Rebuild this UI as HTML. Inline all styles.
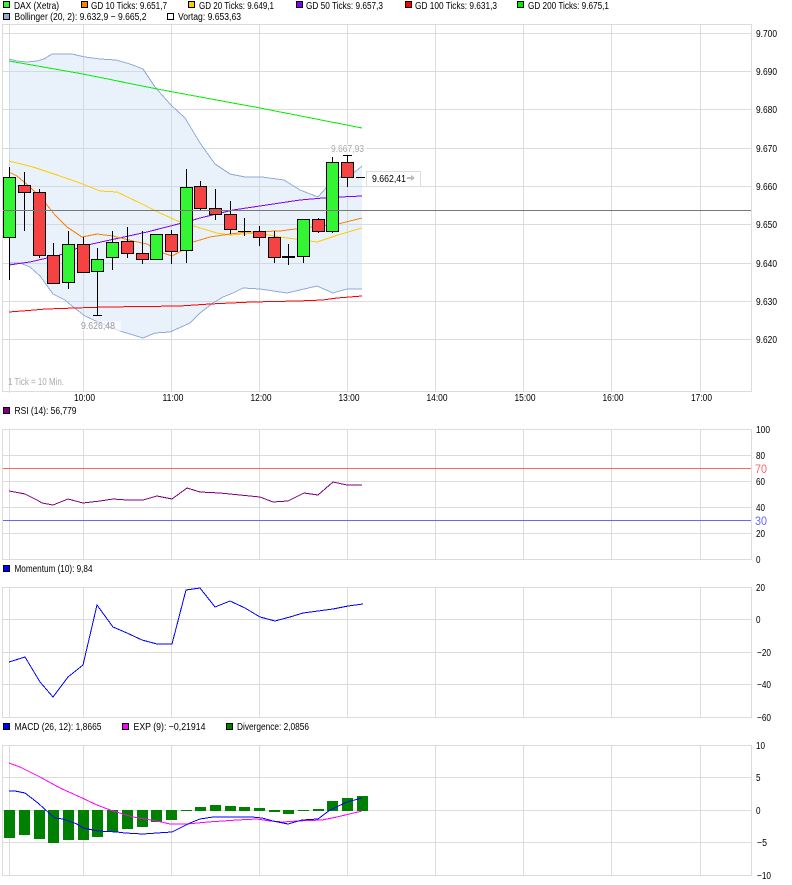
<!DOCTYPE html>
<html><head><meta charset="utf-8"><style>
html,body{margin:0;padding:0;background:#fff;width:792px;height:885px;overflow:hidden}
svg{display:block}
text{font-family:"Liberation Sans",sans-serif;font-size:10px;fill:#000}
.g line{stroke:#dcdcdc;stroke-width:1}
.c{stroke:#000;stroke-width:1}
.u{fill:#33f533}.d{fill:#f54343}
.l{fill:none;stroke-width:1}
.s{stroke:#000;stroke-width:1}
</style></head><body>
<svg width="792" height="885" viewBox="0 0 792 885" xmlns="http://www.w3.org/2000/svg">
<g shape-rendering="crispEdges">
<!-- legend swatches -->
<rect class="s" x="3.5" y="1.5" width="6" height="6" fill="#33f533"/>
<rect class="s" x="81.5" y="1.5" width="6" height="6" fill="#ff7f00"/>
<rect class="s" x="188.5" y="1.5" width="6" height="6" fill="#ffcc00"/>
<rect class="s" x="296.5" y="1.5" width="6" height="6" fill="#7f00ff"/>
<rect class="s" x="405.5" y="1.5" width="6" height="6" fill="#ff0000"/>
<rect class="s" x="517.5" y="1.5" width="6" height="6" fill="#00ee00"/>
<rect class="s" x="3.5" y="13.5" width="6" height="6" fill="#92a9dc"/>
<rect class="s" x="167.5" y="13.5" width="6" height="6" fill="#fff"/>
<rect class="s" x="3.5" y="407.5" width="6" height="6" fill="#800080"/>
<rect class="s" x="3.5" y="565.5" width="6" height="6" fill="#0000ff"/>
<rect class="s" x="3.5" y="723.5" width="6" height="6" fill="#0000ff"/>
<rect class="s" x="122.5" y="723.5" width="6" height="6" fill="#ff00ff"/>
<rect class="s" x="226.5" y="723.5" width="6" height="6" fill="#008000"/>

<!-- main grid -->
<g class="g">
<line x1="2" y1="24.5" x2="752" y2="24.5"/><line x1="2" y1="33.5" x2="752" y2="33.5"/><line x1="2" y1="71.5" x2="752" y2="71.5"/><line x1="2" y1="109.5" x2="752" y2="109.5"/><line x1="2" y1="148.5" x2="752" y2="148.5"/><line x1="2" y1="186.5" x2="752" y2="186.5"/><line x1="2" y1="224.5" x2="752" y2="224.5"/><line x1="2" y1="263.5" x2="752" y2="263.5"/><line x1="2" y1="301.5" x2="752" y2="301.5"/><line x1="2" y1="339.5" x2="752" y2="339.5"/><line x1="2" y1="391.5" x2="752" y2="391.5"/>
<line x1="2.5" y1="24" x2="2.5" y2="392"/><line x1="751.5" y1="24" x2="751.5" y2="392"/>
<line x1="9.5" y1="24" x2="9.5" y2="393"/><line x1="83.5" y1="24" x2="83.5" y2="392"/><line x1="171.5" y1="24" x2="171.5" y2="392"/><line x1="259.5" y1="24" x2="259.5" y2="392"/><line x1="347.5" y1="24" x2="347.5" y2="392"/><line x1="435.5" y1="24" x2="435.5" y2="392"/><line x1="523.5" y1="24" x2="523.5" y2="392"/><line x1="611.5" y1="24" x2="611.5" y2="392"/><line x1="700.5" y1="24" x2="700.5" y2="392"/>
<!-- RSI grid -->
<line x1="2" y1="429.5" x2="752" y2="429.5"/><line x1="2" y1="455.5" x2="752" y2="455.5"/><line x1="2" y1="481.5" x2="752" y2="481.5"/><line x1="2" y1="507.5" x2="752" y2="507.5"/><line x1="2" y1="533.5" x2="752" y2="533.5"/><line x1="2" y1="559.5" x2="752" y2="559.5"/>
<line x1="2.5" y1="429" x2="2.5" y2="560"/><line x1="751.5" y1="429" x2="751.5" y2="560"/>
<line x1="9.5" y1="429" x2="9.5" y2="560"/><line x1="83.5" y1="429" x2="83.5" y2="560"/><line x1="171.5" y1="429" x2="171.5" y2="560"/><line x1="259.5" y1="429" x2="259.5" y2="560"/><line x1="347.5" y1="429" x2="347.5" y2="560"/><line x1="435.5" y1="429" x2="435.5" y2="560"/><line x1="523.5" y1="429" x2="523.5" y2="560"/><line x1="611.5" y1="429" x2="611.5" y2="560"/><line x1="700.5" y1="429" x2="700.5" y2="560"/>
<!-- Momentum grid -->
<line x1="2" y1="587.5" x2="752" y2="587.5"/><line x1="2" y1="619.5" x2="752" y2="619.5"/><line x1="2" y1="652.5" x2="752" y2="652.5"/><line x1="2" y1="684.5" x2="752" y2="684.5"/><line x1="2" y1="717.5" x2="752" y2="717.5"/>
<line x1="2.5" y1="587" x2="2.5" y2="718"/><line x1="751.5" y1="587" x2="751.5" y2="718"/>
<line x1="9.5" y1="587" x2="9.5" y2="718"/><line x1="83.5" y1="587" x2="83.5" y2="718"/><line x1="171.5" y1="587" x2="171.5" y2="718"/><line x1="259.5" y1="587" x2="259.5" y2="718"/><line x1="347.5" y1="587" x2="347.5" y2="718"/><line x1="435.5" y1="587" x2="435.5" y2="718"/><line x1="523.5" y1="587" x2="523.5" y2="718"/><line x1="611.5" y1="587" x2="611.5" y2="718"/><line x1="700.5" y1="587" x2="700.5" y2="718"/>
<!-- MACD grid -->
<line x1="2" y1="745.5" x2="752" y2="745.5"/><line x1="2" y1="777.5" x2="752" y2="777.5"/><line x1="2" y1="810.5" x2="752" y2="810.5"/><line x1="2" y1="842.5" x2="752" y2="842.5"/><line x1="2" y1="875.5" x2="752" y2="875.5"/>
<line x1="2.5" y1="745" x2="2.5" y2="876"/><line x1="751.5" y1="745" x2="751.5" y2="876"/>
<line x1="9.5" y1="745" x2="9.5" y2="876"/><line x1="83.5" y1="745" x2="83.5" y2="876"/><line x1="171.5" y1="745" x2="171.5" y2="876"/><line x1="259.5" y1="745" x2="259.5" y2="876"/><line x1="347.5" y1="745" x2="347.5" y2="876"/><line x1="435.5" y1="745" x2="435.5" y2="876"/><line x1="523.5" y1="745" x2="523.5" y2="876"/><line x1="611.5" y1="745" x2="611.5" y2="876"/><line x1="700.5" y1="745" x2="700.5" y2="876"/>
</g>

<!-- Bollinger band -->
<polygon fill="#bcd2f3" fill-opacity=".32" points="9,59 17,61 27,62 37,61 44,59 52,54 72,54 85,57 100,59 116,60 130,64 143,69 155,87 170,104 185,118 200,143 215,164 230,174 245,177 262,177 284,180 300,190 318,197 326,188 338,178 355,172 362,166 362,289 347,289 333,293 317,286 287,293 260,289 243,288 233,293 223,297 213,303 200,313 190,323 170,332 155,333 143,338 120,331 100,323 85,316 72,306 65,300 53,294 40,276 30,267 20,263 9,263"/>
<polyline class="l" stroke="#92a9dc" points="9,59 17,61 27,62 37,61 44,59 52,54 72,54 85,57 100,59 116,60 130,64 143,69 155,87 170,104 185,118 200,143 215,164 230,174 245,177 262,177 284,180 300,190 318,197 326,188 338,178 355,172 362,166"/>
<polyline class="l" stroke="#92a9dc" points="9,263 20,263 30,267 40,276 53,294 65,300 72,306 85,316 100,323 120,331 143,338 155,333 170,332 190,323 200,313 213,303 223,297 233,293 243,288 260,289 287,293 317,286 333,293 347,289 362,289"/>

<!-- moving averages -->
<polyline class="l" stroke="#00f000" points="9,61 83,74 157,89 260,108 362,128"/>
<polyline class="l" stroke="#ff0000" points="9,312 22,311 46,309 105,307 180,306 210,304 252,302 297,301 323,300 337,298 362,296"/>
<polyline class="l" stroke="#7f00ff" points="9,265 30,262 60,255 83,246 110,240 147,232 190,221 200,218 233,210 300,200 323,198 340,197 362,196"/>
<polyline class="l" stroke="#ffcc00" points="9,161 33,167 57,175 80,183 100,191 117,192 140,203 160,213 180,222 190,225 217,233 230,235 257,233 280,237 317,242 338,235 362,228"/>
<polyline class="l" stroke="#ff7f00" points="9,172 17,176 30,187 43,200 55,215 67,227 82,237 97,234 113,236 133,241 147,244 160,252 172,256 187,248 190,243 210,237 230,234 247,232 280,231 303,228 338,224 362,218"/>

<!-- candles -->
<g class="c">
<line x1="9.5" y1="167" x2="9.5" y2="280"/><rect class="u" x="3.5" y="177.5" width="12" height="60"/>
<line x1="24.5" y1="172" x2="24.5" y2="231"/><rect class="d" x="18.5" y="185.5" width="12" height="7"/>
<line x1="39.5" y1="189" x2="39.5" y2="258"/><rect class="d" x="33.5" y="192.5" width="12" height="63"/>
<line x1="53.5" y1="243" x2="53.5" y2="284"/><rect class="d" x="47.5" y="255.5" width="12" height="28"/>
<line x1="68.5" y1="231" x2="68.5" y2="289"/><rect class="u" x="62.5" y="244.5" width="12" height="38"/>
<line x1="83.5" y1="237" x2="83.5" y2="272"/><rect class="d" x="77.5" y="244.5" width="12" height="28"/>
<line x1="97.5" y1="248" x2="97.5" y2="315"/><line x1="93" y1="315.5" x2="102" y2="315.5"/><rect class="u" x="91.5" y="259.5" width="12" height="12"/>
<line x1="112.5" y1="231" x2="112.5" y2="270"/><rect class="u" x="106.5" y="242.5" width="12" height="15"/>
<line x1="127.5" y1="227" x2="127.5" y2="258"/><rect class="d" x="121.5" y="241.5" width="12" height="12"/>
<line x1="142.5" y1="231" x2="142.5" y2="264"/><rect class="d" x="136.5" y="253.5" width="12" height="6"/>
<rect class="u" x="150.5" y="234.5" width="12" height="25"/>
<line x1="171.5" y1="230" x2="171.5" y2="264"/><rect class="d" x="165.5" y="234.5" width="12" height="17"/>
<line x1="186.5" y1="169" x2="186.5" y2="263"/><rect class="u" x="180.5" y="187.5" width="12" height="63"/>
<line x1="200.5" y1="181" x2="200.5" y2="210"/><rect class="d" x="194.5" y="186.5" width="12" height="22"/>
<line x1="215.5" y1="189" x2="215.5" y2="220"/><rect class="d" x="209.5" y="208.5" width="12" height="6"/>
<line x1="230.5" y1="201" x2="230.5" y2="234"/><rect class="d" x="224.5" y="214.5" width="12" height="15"/>
<line x1="244.5" y1="218" x2="244.5" y2="236"/><line x1="238" y1="231.5" x2="251" y2="231.5"/>
<line x1="259.5" y1="226" x2="259.5" y2="246"/><rect class="d" x="253.5" y="231.5" width="12" height="6"/>
<line x1="274.5" y1="231" x2="274.5" y2="263"/><rect class="d" x="268.5" y="237.5" width="12" height="20"/>
<line x1="288.5" y1="244" x2="288.5" y2="265"/><rect x="282" y="256" width="13" height="2" fill="#000" stroke="none"/>
<line x1="303.5" y1="256" x2="303.5" y2="263"/><rect class="u" x="297.5" y="219.5" width="12" height="37"/>
<line x1="318.5" y1="218" x2="318.5" y2="233"/><rect class="d" x="312.5" y="219.5" width="12" height="12"/>
<line x1="332.5" y1="157" x2="332.5" y2="233"/><rect class="u" x="326.5" y="162.5" width="12" height="69"/>
<line x1="347.5" y1="155" x2="347.5" y2="187"/><line x1="343" y1="155.5" x2="352" y2="155.5"/><rect class="d" x="341.5" y="162.5" width="12" height="15"/>
<line x1="356" y1="177.5" x2="365" y2="177.5"/>
</g>

<!-- Vorlag line -->
<line x1="3" y1="210.5" x2="751" y2="210.5" stroke="#777" stroke-width="1"/>

<!-- label backgrounds -->
<rect x="81" y="321" width="40" height="10" fill="#fff" fill-opacity=".6"/>
<rect x="330" y="144" width="36" height="10" fill="#fff" fill-opacity=".6"/>
<rect x="366.5" y="171.5" width="54" height="15" fill="#fff" stroke="#dcdcdc"/>
<rect x="407" y="177" width="6" height="2" fill="#bbb"/>
<polygon points="411,175 415,178 411,181" fill="#bbb"/>

<!-- RSI -->
<line x1="3" y1="468.5" x2="751" y2="468.5" stroke="#ff6666"/>
<line x1="3" y1="520.5" x2="751" y2="520.5" stroke="#6666ff"/>
<polyline class="l" stroke="#800080" points="9,491 20,493 25,494 37,500 42,503 53,505 68,499 83,503 100,501 113,499 127,500 143,500 157,496 172,499 187,488 200,492 220,493 260,497 273,502 288,501 304,493 318,495 333,482 347,485 362,485"/>

<!-- Momentum -->
<polyline class="l" stroke="#0000ff" points="9,662 25,657 40,682 53,697 68,677 83,665 97,605 113,627 127,633 142,640 157,644 172,644 186,590 200,588 215,607 230,601 245,608 260,617 275,621 290,617 303,613 318,611 333,609 348,606 363,604"/>

<!-- MACD bars -->
<g fill="#008000">
<rect x="4" y="810" width="11" height="28"/><rect x="19" y="810" width="11" height="25"/><rect x="34" y="810" width="11" height="29"/><rect x="48" y="810" width="11" height="33"/><rect x="63" y="810" width="11" height="30"/><rect x="78" y="810" width="11" height="30"/><rect x="92" y="810" width="11" height="27"/><rect x="107" y="810" width="11" height="22"/><rect x="122" y="810" width="11" height="19"/><rect x="137" y="810" width="11" height="17"/><rect x="151" y="810" width="11" height="12"/><rect x="166" y="810" width="11" height="10"/><rect x="181" y="810" width="11" height="1"/>
<rect x="195" y="807" width="11" height="4"/><rect x="210" y="805" width="11" height="6"/><rect x="225" y="806" width="11" height="5"/><rect x="239" y="807" width="11" height="4"/><rect x="254" y="808" width="11" height="3"/><rect x="269" y="810" width="11" height="2"/><rect x="283" y="810" width="11" height="4"/><rect x="298" y="810" width="11" height="1"/><rect x="313" y="809" width="11" height="2"/><rect x="327" y="801" width="11" height="10"/><rect x="342" y="798" width="11" height="13"/><rect x="357" y="796" width="11" height="15"/>
</g>
<polyline class="l" stroke="#ff00ff" points="9,763 20,767 40,777 60,788 80,797 97,805 113,811 133,817 157,821 170,824 187,824 208,822 237,820 257,819 270,821 283,822 297,821 322,820 337,817 362,811"/>
<polyline class="l" stroke="#0000ff" points="9,791 15,791 25,793 38,803 50,814 55,818 63,819 77,824 83,828 98,831 117,832 125,833 143,834 157,833 172,832 182,827 190,823 200,819 213,817 252,817 262,818 273,821 288,824 302,820 318,819 330,810 347,802 362,798"/>
</g>

<!-- legend text -->
<text x="14" y="9" textLength="45" lengthAdjust="spacingAndGlyphs">DAX (Xetra)</text>
<text x="91" y="9" textLength="76" lengthAdjust="spacingAndGlyphs">GD 10 Ticks: 9.651,7</text>
<text x="199" y="9" textLength="75" lengthAdjust="spacingAndGlyphs">GD 20 Ticks: 9.649,1</text>
<text x="306" y="9" textLength="77" lengthAdjust="spacingAndGlyphs">GD 50 Ticks: 9.657,3</text>
<text x="415" y="9" textLength="82" lengthAdjust="spacingAndGlyphs">GD 100 Ticks: 9.631,3</text>
<text x="528" y="9" textLength="81" lengthAdjust="spacingAndGlyphs">GD 200 Ticks: 9.675,1</text>
<text x="14.5" y="20" textLength="132" lengthAdjust="spacingAndGlyphs">Bollinger (20, 2): 9.632,9 − 9.665,2</text>
<text x="178" y="20" textLength="63" lengthAdjust="spacingAndGlyphs">Vortag: 9.653,63</text>
<text x="14.5" y="414" textLength="62" lengthAdjust="spacingAndGlyphs">RSI (14): 56,779</text>
<text x="14.5" y="572" textLength="78" lengthAdjust="spacingAndGlyphs">Momentum (10): 9,84</text>
<text x="14.5" y="730" textLength="87" lengthAdjust="spacingAndGlyphs">MACD (26, 12): 1,8665</text>
<text x="133.5" y="730" textLength="72" lengthAdjust="spacingAndGlyphs">EXP (9): −0,21914</text>
<text x="237" y="730" textLength="72" lengthAdjust="spacingAndGlyphs">Divergence: 2,0856</text>

<!-- y labels main -->
<text x="756" y="37" textLength="21" lengthAdjust="spacingAndGlyphs">9.700</text>
<text x="756" y="75" textLength="21" lengthAdjust="spacingAndGlyphs">9.690</text>
<text x="756" y="113" textLength="21" lengthAdjust="spacingAndGlyphs">9.680</text>
<text x="756" y="152" textLength="21" lengthAdjust="spacingAndGlyphs">9.670</text>
<text x="756" y="190" textLength="21" lengthAdjust="spacingAndGlyphs">9.660</text>
<text x="756" y="228" textLength="21" lengthAdjust="spacingAndGlyphs">9.650</text>
<text x="756" y="267" textLength="21" lengthAdjust="spacingAndGlyphs">9.640</text>
<text x="756" y="305" textLength="21" lengthAdjust="spacingAndGlyphs">9.630</text>
<text x="756" y="343" textLength="21" lengthAdjust="spacingAndGlyphs">9.620</text>

<!-- x labels -->
<text x="74" y="401" textLength="21" lengthAdjust="spacingAndGlyphs">10:00</text>
<text x="162.5" y="401" textLength="21" lengthAdjust="spacingAndGlyphs">11:00</text>
<text x="250.5" y="401" textLength="21" lengthAdjust="spacingAndGlyphs">12:00</text>
<text x="338.5" y="401" textLength="21" lengthAdjust="spacingAndGlyphs">13:00</text>
<text x="426.5" y="401" textLength="21" lengthAdjust="spacingAndGlyphs">14:00</text>
<text x="514.5" y="401" textLength="21" lengthAdjust="spacingAndGlyphs">15:00</text>
<text x="602.5" y="401" textLength="21" lengthAdjust="spacingAndGlyphs">16:00</text>
<text x="691" y="401" textLength="21" lengthAdjust="spacingAndGlyphs">17:00</text>

<!-- RSI labels -->
<text x="756" y="433" textLength="14" lengthAdjust="spacingAndGlyphs">100</text>
<text x="756" y="459" textLength="9" lengthAdjust="spacingAndGlyphs">80</text>
<text x="755" y="473" textLength="12" lengthAdjust="spacingAndGlyphs" style="font-size:12px;fill:#ff6666">70</text>
<text x="756" y="485" textLength="9" lengthAdjust="spacingAndGlyphs">60</text>
<text x="756" y="511" textLength="9" lengthAdjust="spacingAndGlyphs">40</text>
<text x="755" y="525" textLength="12" lengthAdjust="spacingAndGlyphs" style="font-size:12px;fill:#6666ff">30</text>
<text x="756" y="537" textLength="9" lengthAdjust="spacingAndGlyphs">20</text>
<text x="756" y="563" textLength="4.5" lengthAdjust="spacingAndGlyphs">0</text>

<!-- Momentum labels -->
<text x="756" y="591" textLength="9" lengthAdjust="spacingAndGlyphs">20</text>
<text x="756" y="623" textLength="4.5" lengthAdjust="spacingAndGlyphs">0</text>
<text x="757" y="656" textLength="14" lengthAdjust="spacingAndGlyphs">−20</text>
<text x="757" y="688" textLength="14" lengthAdjust="spacingAndGlyphs">−40</text>
<text x="757" y="721" textLength="14" lengthAdjust="spacingAndGlyphs">−60</text>

<!-- MACD labels -->
<text x="756" y="749" textLength="9" lengthAdjust="spacingAndGlyphs">10</text>
<text x="756" y="781" textLength="4.5" lengthAdjust="spacingAndGlyphs">5</text>
<text x="756" y="814" textLength="4.5" lengthAdjust="spacingAndGlyphs">0</text>
<text x="757" y="846" textLength="10" lengthAdjust="spacingAndGlyphs">−5</text>
<text x="757" y="879" textLength="14" lengthAdjust="spacingAndGlyphs">−10</text>

<!-- annotations -->
<text x="8" y="385" textLength="56" lengthAdjust="spacingAndGlyphs" style="fill:#aaa">1 Tick = 10 Min.</text>
<text x="81" y="329" textLength="34" lengthAdjust="spacingAndGlyphs" style="fill:#999">9.626,48</text>
<text x="331" y="152" textLength="33" lengthAdjust="spacingAndGlyphs" style="fill:#aaa">9.667,93</text>
<text x="372" y="182" textLength="34" lengthAdjust="spacingAndGlyphs">9.662,41</text>
</svg>
</body></html>
